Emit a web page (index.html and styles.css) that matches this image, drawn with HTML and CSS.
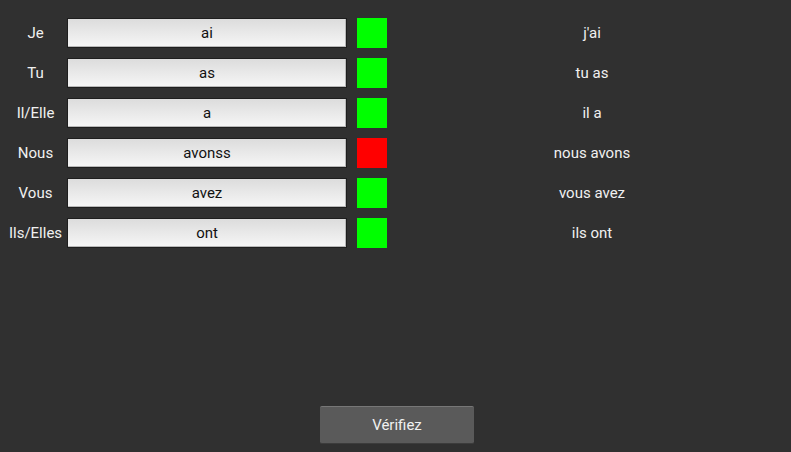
FILE: index.html
```html
<!DOCTYPE html>
<html>
<head>
<meta charset="utf-8">
<link rel="stylesheet" href="styles.css">
</head>
<body>
<div class="app">
  <div class="rows">
    <div class="row"><span class="label">Je</span><div class="field">ai</div><div class="mark ok"></div><span class="answer">j'ai</span></div>
    <div class="row"><span class="label">Tu</span><div class="field">as</div><div class="mark ok"></div><span class="answer">tu as</span></div>
    <div class="row"><span class="label">Il/Elle</span><div class="field">a</div><div class="mark ok"></div><span class="answer">il a</span></div>
    <div class="row"><span class="label">Nous</span><div class="field">avonss</div><div class="mark bad"></div><span class="answer">nous avons</span></div>
    <div class="row"><span class="label">Vous</span><div class="field">avez</div><div class="mark ok"></div><span class="answer">vous avez</span></div>
    <div class="row"><span class="label">Ils/Elles</span><div class="field">ont</div><div class="mark ok"></div><span class="answer">ils ont</span></div>
  </div>
  <div class="footer"><button class="check">Vérifiez</button></div>
</div>
</body>
</html>
```

FILE: styles.css
```css
html, body {
  margin: 0;
  padding: 0;
  background: #303030;
  width: 791px;
  height: 452px;
  overflow: hidden;
}
.app {
  font-family: Roboto, "Liberation Sans", sans-serif;
  font-size: 15px;
  color: #ffffff;
  display: flex;
  flex-direction: column;
  height: 452px;
}
.rows {
  display: flex;
  flex-direction: column;
  gap: 10px;
  padding-top: 18px;
  flex: 1;
}
.row {
  display: flex;
  align-items: center;
  height: 30px;
}
.label {
  width: 63px;
  margin-left: 4px;
  text-align: center;
  color: #f0f0f0;
}
.field {
  box-sizing: border-box;
  width: 280px;
  height: 30px;
  border: 1px solid #1e1e1e;
  background: linear-gradient(#dcdcdc, #f6f6f6);
  box-shadow: inset -1px -1px 0 #b8b8b8;
  color: #111;
  text-align: center;
  line-height: 28px;
}
.mark {
  width: 30px;
  height: 30px;
  margin-left: 10px;
}
.ok { background: #00ff00; }
.bad { background: #ff0000; }
.answer {
  flex: 1;
  text-align: center;
  padding-left: 8px;
  padding-right: 2px;
  color: #f0f0f0;
}
.footer {
  display: flex;
  justify-content: center;
  padding-bottom: 8px;
  padding-left: 3px;
}
.check {
  width: 154px;
  height: 38px;
  background: #5a5a5a;
  border: none;
  border-top: 1px solid #777;
  border-bottom: 1px solid #3c3c3c;
  border-radius: 2px;
  color: #f0f0f0;
  font-family: Roboto, "Liberation Sans", sans-serif;
  font-size: 15px;
  padding: 0;
}
```
